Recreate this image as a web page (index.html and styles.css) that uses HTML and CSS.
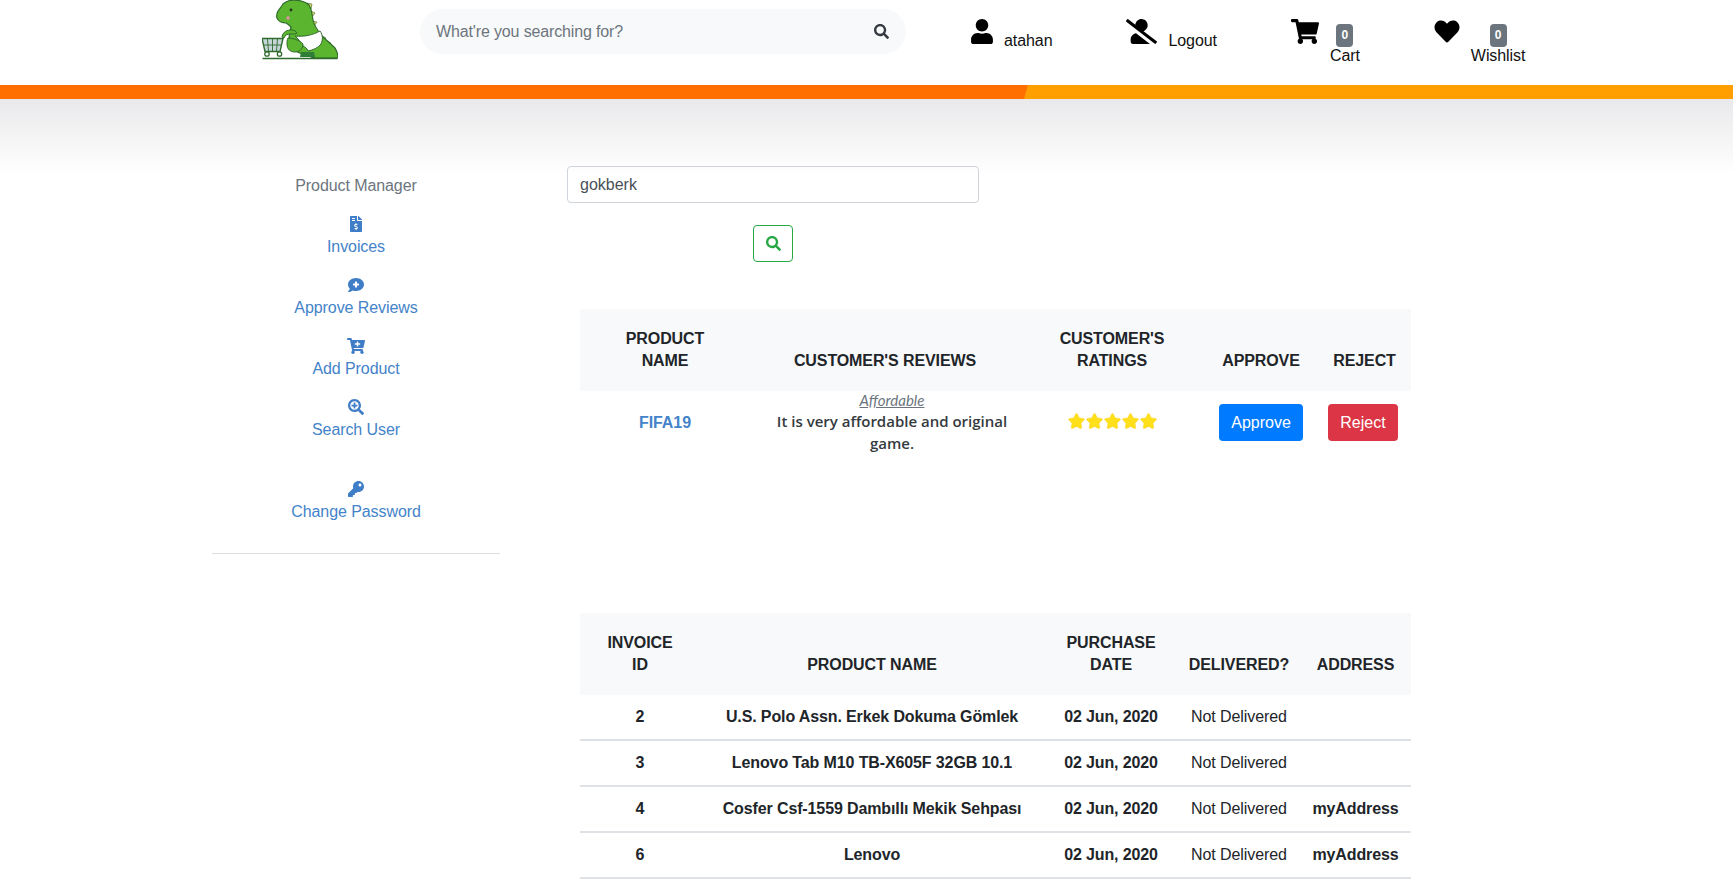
FILE: index.html
```html
<!DOCTYPE html>
<html lang="en">
<head>
    <meta charset="UTF-8">
    <title>Product Manager</title>
    <link rel="stylesheet" href="styles.css">
</head>
<body>
    <header class="top-header">
        <a class="logo" href="#">
            <svg viewBox="0 0 76 60" width="76" height="60">
                <!-- cart -->
                <path d="M0 38.500h21l-3 13H3z" fill="#c5d5d8" stroke="#2f6b2c" stroke-width="1.400"/>
                <path d="M5.500 39l1 12M10.500 39v12M15.500 39l-1 12M1 45h19" stroke="#2f6b2c" stroke-width=".9" fill="none"/>
                <circle cx="5" cy="54" r="2.200" fill="#fff" stroke="#2f6b2c" stroke-width="1.300"/>
                <circle cx="17.500" cy="54" r="2.200" fill="#fff" stroke="#2f6b2c" stroke-width="1.300"/>
                <!-- spikes -->
                <path d="M45 3l5 1-1 5zM49 11l4 2-3 4zM50 21l5 1-3 4zM60 36l4 2-3 3zM65 41l4 2-3 3zM70 46l4 3-4 2z" fill="#e9d66b" stroke="#2f6b2c" stroke-width=".6"/>
                <!-- body and tail -->
                <path d="M28 .500C35-.500 43 1 47 5c3 5 3 10 4 15 1 6 5 11 9 16 4 4 9 8 13 12 2 3 3 6 3 10H54c-5 0-9-3-13-4-6-1-13-6-14-14 0-5 1-9 2-13-2-2-3-3-5-4-4 0-8-2-9-5-1-3 0-5 1-7 2-3 4-5 5-7 2-2 5-3 8-4z" fill="#5cb52f" stroke="#2f6b2c" stroke-width="1.200"/>
                <!-- arm -->
                <path d="M29 30c-3 0-8 1-9 7l2 1c1-3 3-4 7-4 3 0 5 0 6-1-1-2-3-3-6-3z" fill="#5cb52f" stroke="#2f6b2c" stroke-width="1"/>
                <!-- diaper -->
                <path d="M33 36c9 1 18-1 25-5 3 4 3 9 1 13-3 4-8 6-13 7-1-3-3-4-5-5-2-4-5-7-8-10z" fill="#fff" stroke="#2f6b2c" stroke-width="1"/>
                <!-- leg and foot -->
                <path d="M26 38c5 0 11 2 15 6 0 4-3 8-8 8s-8-3-8-8c0-2 0-4 1-6z" fill="#5cb52f" stroke="#2f6b2c" stroke-width="1"/>
                <path d="M39 52h13l1 5H38z" fill="#2f7d36"/>
                <!-- face -->
                <circle cx="29" cy="10" r="1.400" fill="#24331f"/>
                <circle cx="26" cy="18" r="1.700" fill="#e58fa8"/>
                <path d="M.500 58.500h75" stroke="#2f6b2c" stroke-width="1.400"/>
            </svg>
        </a>
        <form class="site-search">
            <input type="text" placeholder="What're you searching for?">
            <svg class="site-search-icon" viewBox="0 0 512 512"><path d="M505 442.700L405.300 343c-4.500-4.500-10.600-7-17-7H372c27.600-35.300 44-79.700 44-128C416 93.100 322.900 0 208 0S0 93.100 0 208s93.100 208 208 208c48.300 0 92.700-16.400 128-44v16.300c0 6.400 2.500 12.500 7 17l99.700 99.700c9.400 9.400 24.600 9.400 33.900 0l28.300-28.300c9.400-9.400 9.400-24.600.1-34zM208 336c-70.700 0-128-57.200-128-128 0-70.700 57.200-128 128-128 70.700 0 128 57.200 128 128 0 70.700-57.200 128-128 128z"/></svg>
        </form>
        <nav class="top-nav">
            <a class="nav-item" href="#">
                <svg class="nav-icon" width="22" height="25" viewBox="0 0 448 512"><path d="M224 256c70.700 0 128-57.300 128-128S294.700 0 224 0 96 57.300 96 128s57.300 128 128 128zm89.600 32h-16.700c-22.200 10.200-46.900 16-72.900 16s-50.600-5.800-72.900-16h-16.700C60.200 288 0 348.200 0 422.400V464c0 26.500 21.500 48 48 48h352c26.500 0 48-21.500 48-48v-41.600c0-74.200-60.200-134.400-134.400-134.400z"/></svg>
                <span class="nav-label">atahan</span>
            </a>
            <a class="nav-item" href="#">
                <svg class="nav-icon" width="31" height="25" viewBox="0 0 640 512"><path d="M633.800 458.100L362.300 248.300C412.100 230.700 448 183.800 448 128 448 57.300 390.700 0 320 0c-67.100 0-121.500 51.800-126.900 117.400L45.500 3.400C38.500-2 28.500-.8 23 6.200L3.400 31.400c-5.400 7-4.200 17 2.800 22.400l588.400 454.700c7 5.400 17 4.200 22.500-2.800l19.600-25.300c5.400-6.800 4.100-16.900-2.900-22.300zM96 422.400V464c0 26.500 21.500 48 48 48h350.200L207.400 290.300C144.200 301.300 96 356 96 422.400z"/></svg>
                <span class="nav-label">Logout</span>
            </a>
            <a class="nav-item" href="#">
                <svg class="nav-icon" width="28" height="25" viewBox="0 0 576 512"><path d="M528.120 301.319l47.273-208C578.806 78.301 567.391 64 551.990 64H159.208l-9.166-44.810C147.758 8.021 137.930 0 126.529 0H24C10.745 0 0 10.745 0 24v16c0 13.255 10.745 24 24 24h69.883l70.248 343.435C147.325 417.100 136 435.222 136 456c0 30.928 25.072 56 56 56s56-25.072 56-56c0-15.674-6.447-29.835-16.824-40h209.647C430.447 426.165 424 440.326 424 456c0 30.928 25.072 56 56 56s56-25.072 56-56c0-22.172-12.888-41.332-31.579-50.405l5.517-24.276c3.413-15.018-8.002-29.319-23.403-29.319H218.117l-6.545-32h293.145c11.206 0 20.920-7.754 23.403-18.681z"/></svg>
                <span class="nav-count">
                    <span class="badge">0</span>
                    <span class="nav-count-label">Cart</span>
                </span>
            </a>
            <a class="nav-item" href="#">
                <svg class="nav-icon" width="26" height="25" viewBox="0 0 512 512"><path d="M462.300 62.600C407.500 15.900 326 24.300 275.700 76.200L256 96.500l-19.700-20.300C186.100 24.300 104.500 15.900 49.700 62.600c-62.800 53.600-66.100 149.800-9.900 207.900l193.500 199.800c12.500 12.900 32.800 12.900 45.300 0l193.500-199.800c56.300-58.100 53-154.300-9.800-207.900z"/></svg>
                <span class="nav-count">
                    <span class="badge">0</span>
                    <span class="nav-count-label">Wishlist</span>
                </span>
            </a>
        </nav>
    </header>

    <div class="color-bar"><div class="color-bar-left"></div></div>

    <div class="page-body">
        <aside class="sidebar">
            <p class="sidebar-title">Product Manager</p>
            <a class="side-link" href="#">
                <svg width="16" height="16" viewBox="0 0 384 512"><path d="M377 105L279.100 7c-4.500-4.500-10.600-7-17-7H256v128h128v-6.100c0-6.300-2.500-12.400-7-16.900zm-153 31V0H24C10.700 0 0 10.700 0 24v464c0 13.300 10.700 24 24 24h336c13.300 0 24-10.700 24-24V160H248c-13.200 0-24-10.800-24-24zM64 72c0-4.420 3.580-8 8-8h80c4.420 0 8 3.580 8 8v16c0 4.420-3.580 8-8 8H72c-4.420 0-8-3.580-8-8V72zm0 80v-16c0-4.420 3.580-8 8-8h80c4.420 0 8 3.580 8 8v16c0 4.420-3.580 8-8 8H72c-4.420 0-8-3.580-8-8zm144 263.880V440c0 4.420-3.580 8-8 8h-16c-4.420 0-8-3.580-8-8v-24.290c-11.290-.58-22.270-4.520-31.370-11.350-3.900-2.930-4.100-8.770-.57-12.140l11.750-11.210c2.770-2.640 6.890-2.760 10.130-.73 3.870 2.420 8.260 3.720 12.820 3.720h28.110c6.500 0 11.800-5.920 11.800-13.190 0-5.950-3.610-11.190-8.770-12.730l-45-13.500c-18.590-5.580-31.580-23.420-31.580-43.390 0-24.520 19.050-44.440 42.670-45.070V240c0-4.420 3.580-8 8-8h16c4.420 0 8 3.580 8 8v24.290c11.290.58 22.270 4.510 31.370 11.350 3.900 2.930 4.100 8.770.57 12.140l-11.750 11.210c-2.770 2.640-6.890 2.760-10.130.73-3.870-2.430-8.260-3.720-12.820-3.720h-28.110c-6.500 0-11.800 5.920-11.800 13.190 0 5.950 3.610 11.190 8.770 12.730l45 13.500c18.590 5.580 31.580 23.420 31.580 43.390 0 24.530-19.050 44.440-42.670 45.070z"/></svg>
                <span>Invoices</span>
            </a>
            <a class="side-link" href="#">
                <svg width="16" height="16" viewBox="0 0 512 512"><path d="M256 32C114.620 32 0 125.120 0 240c0 49.560 21.410 95 57 130.740C44.460 421.050 2.700 466 2.200 466.500A8 8 0 0 0 8 480c66.260 0 116-31.750 140.600-51.380A304.660 304.660 0 0 0 256 448c141.390 0 256-93.120 256-208S397.390 32 256 32zm96 232a8 8 0 0 1-8 8h-56v56a8 8 0 0 1-8 8h-48a8 8 0 0 1-8-8v-56h-56a8 8 0 0 1-8-8v-48a8 8 0 0 1 8-8h56v-56a8 8 0 0 1 8-8h48a8 8 0 0 1 8 8v56h56a8 8 0 0 1 8 8z"/></svg>
                <span>Approve Reviews</span>
            </a>
            <a class="side-link" href="#">
                <svg width="18" height="16" viewBox="0 0 576 512"><path d="M504.717 320H211.572l6.545 32h268.418c15.401 0 26.816 14.301 23.403 29.319l-5.517 24.276C523.112 414.668 536 433.828 536 456c0 31.202-25.519 56.444-56.824 55.994-29.823-.429-54.350-24.631-55.155-54.447-.44-16.287 6.085-31.049 16.803-41.548H231.176C241.553 426.165 248 440.326 248 456c0 31.813-26.528 57.431-58.670 55.938-28.540-1.325-51.751-24.385-53.251-52.917-1.158-22.034 10.436-41.455 28.051-51.586L93.883 64H24C10.745 64 0 53.255 0 40V24C0 10.745 10.745 0 24 0h102.529c11.401 0 21.228 8.021 23.513 19.190L159.208 64H551.990c15.401 0 26.816 14.301 23.403 29.319l-47.273 208C525.637 312.246 515.923 320 504.717 320zM408 168h-48v-40c0-8.837-7.163-16-16-16h-16c-8.837 0-16 7.163-16 16v40h-48c-8.837 0-16 7.163-16 16v16c0 8.837 7.163 16 16 16h48v40c0 8.837 7.163 16 16 16h16c8.837 0 16-7.163 16-16v-40h48c8.837 0 16-7.163 16-16v-16c0-8.837-7.163-16-16-16z"/></svg>
                <span>Add Product</span>
            </a>
            <a class="side-link" href="#">
                <svg width="16" height="16" viewBox="0 0 512 512"><path d="M304 192v32c0 6.600-5.400 12-12 12h-56v56c0 6.600-5.400 12-12 12h-32c-6.600 0-12-5.400-12-12v-56h-56c-6.600 0-12-5.400-12-12v-32c0-6.600 5.400-12 12-12h56v-56c0-6.600 5.400-12 12-12h32c6.600 0 12 5.400 12 12v56h56c6.600 0 12 5.400 12 12zm201 284.700L476.700 505c-9.400 9.400-24.600 9.400-33.900 0L343 405.300c-4.500-4.500-7-10.600-7-17V372c-35.300 27.600-79.700 44-128 44C93.100 416 0 322.900 0 208S93.100 0 208 0s208 93.100 208 208c0 48.300-16.400 92.700-44 128h16.300c6.400 0 12.500 2.500 17 7l99.700 99.700c9.300 9.400 9.300 24.600 0 34zM344 208c0-75.200-60.800-136-136-136S72 132.800 72 208s60.800 136 136 136 136-60.800 136-136z"/></svg>
                <span>Search User</span>
            </a>
            <a class="side-link side-link-password" href="#">
                <svg width="16" height="16" viewBox="0 0 512 512"><path d="M512 176.001C512 273.203 433.202 352 336 352c-11.220 0-22.190-1.062-32.827-3.069l-24.012 27.014A23.999 23.999 0 0 1 261.223 384H224v40c0 13.255-10.745 24-24 24h-40v40c0 13.255-10.745 24-24 24H24c-13.255 0-24-10.745-24-24v-78.059c0-6.365 2.529-12.470 7.029-16.971l161.802-161.802C163.108 213.814 160 195.271 160 176 160 78.798 238.797.001 335.999 0 433.488-.001 512 78.511 512 176.001zM336 128c0 26.510 21.490 48 48 48s48-21.490 48-48-21.490-48-48-48-48 21.490-48 48z"/></svg>
                <span>Change Password</span>
            </a>
            <hr class="sidebar-line">
        </aside>

        <main class="content">
            <form class="user-search">
                <input type="text" value="gokberk">
                <button type="button">
                    <svg width="14" height="14" viewBox="0 0 512 512"><path d="M505 442.700L405.300 343c-4.500-4.500-10.600-7-17-7H372c27.600-35.300 44-79.700 44-128C416 93.100 322.900 0 208 0S0 93.100 0 208s93.100 208 208 208c48.300 0 92.700-16.400 128-44v16.300c0 6.400 2.500 12.500 7 17l99.700 99.700c9.400 9.400 24.600 9.400 33.900 0l28.300-28.300c9.400-9.400 9.400-24.600.1-34zM208 336c-70.700 0-128-57.200-128-128 0-70.700 57.200-128 128-128 70.700 0 128 57.200 128 128 0 70.700-57.200 128-128 128z"/></svg>
                </button>
            </form>

            <table class="data-table reviews-table">
                <thead>
                    <tr>
                        <th>Product<br>Name</th>
                        <th>Customer's Reviews</th>
                        <th>Customer's<br>Ratings</th>
                        <th>Approve</th>
                        <th>Reject</th>
                    </tr>
                </thead>
                <tbody>
                    <tr>
                        <td class="product-cell"><a class="product-link" href="#">FIFA19</a></td>
                        <td class="review-cell">
                            <span class="review-title">Affordable</span>
                            <span class="review-text">It is very affordable and original game.</span>
                        </td>
                        <td>
                            <span class="stars">
                                <svg viewBox="0 0 576 512"><path d="M259.300 17.800L194 150.200 47.900 171.500c-26.200 3.800-36.700 36.100-17.700 54.600l105.700 103-25 145.500c-4.500 26.300 23.200 46 46.400 33.700L288 439.600l130.700 68.700c23.200 12.200 50.900-7.400 46.400-33.700l-25-145.500 105.700-103c19-18.500 8.500-50.800-17.700-54.600L382 150.200 316.700 17.800c-11.700-23.600-45.600-23.900-57.400 0z"/></svg>
                                <svg viewBox="0 0 576 512"><path d="M259.300 17.800L194 150.200 47.900 171.500c-26.200 3.800-36.700 36.100-17.700 54.600l105.700 103-25 145.500c-4.500 26.300 23.200 46 46.400 33.700L288 439.600l130.700 68.700c23.200 12.200 50.900-7.400 46.400-33.700l-25-145.500 105.700-103c19-18.500 8.500-50.800-17.700-54.600L382 150.200 316.700 17.800c-11.700-23.600-45.600-23.900-57.400 0z"/></svg>
                                <svg viewBox="0 0 576 512"><path d="M259.300 17.800L194 150.200 47.900 171.500c-26.200 3.800-36.700 36.100-17.700 54.600l105.700 103-25 145.500c-4.500 26.300 23.200 46 46.400 33.700L288 439.600l130.700 68.700c23.200 12.200 50.900-7.400 46.400-33.700l-25-145.500 105.700-103c19-18.500 8.500-50.800-17.700-54.600L382 150.200 316.700 17.800c-11.700-23.600-45.600-23.900-57.400 0z"/></svg>
                                <svg viewBox="0 0 576 512"><path d="M259.300 17.800L194 150.200 47.900 171.500c-26.200 3.800-36.700 36.100-17.700 54.600l105.700 103-25 145.500c-4.500 26.300 23.200 46 46.400 33.700L288 439.600l130.700 68.700c23.200 12.200 50.900-7.400 46.400-33.700l-25-145.500 105.700-103c19-18.500 8.500-50.800-17.700-54.600L382 150.200 316.700 17.800c-11.700-23.600-45.600-23.900-57.400 0z"/></svg>
                                <svg viewBox="0 0 576 512"><path d="M259.300 17.800L194 150.200 47.900 171.500c-26.200 3.800-36.700 36.100-17.700 54.600l105.700 103-25 145.500c-4.500 26.300 23.200 46 46.400 33.700L288 439.600l130.700 68.700c23.200 12.200 50.900-7.400 46.400-33.700l-25-145.500 105.700-103c19-18.500 8.500-50.800-17.700-54.600L382 150.200 316.700 17.800c-11.700-23.600-45.600-23.900-57.400 0z"/></svg>
                            </span>
                        </td>
                        <td><button class="btn btn-approve">Approve</button></td>
                        <td class="reject-cell"><button class="btn btn-reject">Reject</button></td>
                    </tr>
                </tbody>
            </table>

            <table class="data-table invoices-table">
                <thead>
                    <tr>
                        <th>Invoice<br>ID</th>
                        <th>Product Name</th>
                        <th>Purchase<br>Date</th>
                        <th>Delivered?</th>
                        <th>Address</th>
                    </tr>
                </thead>
                <tbody>
                    <tr>
                        <td class="strong">2</td>
                        <td class="strong">U.S. Polo Assn. Erkek Dokuma Gömlek</td>
                        <td class="strong">02 Jun, 2020</td>
                        <td>Not Delivered</td>
                        <td class="strong"></td>
                    </tr>
                    <tr>
                        <td class="strong">3</td>
                        <td class="strong">Lenovo Tab M10 TB-X605F 32GB 10.1</td>
                        <td class="strong">02 Jun, 2020</td>
                        <td>Not Delivered</td>
                        <td class="strong"></td>
                    </tr>
                    <tr>
                        <td class="strong">4</td>
                        <td class="strong">Cosfer Csf-1559 Dambıllı Mekik Sehpası</td>
                        <td class="strong">02 Jun, 2020</td>
                        <td>Not Delivered</td>
                        <td class="strong">myAddress</td>
                    </tr>
                    <tr>
                        <td class="strong">6</td>
                        <td class="strong">Lenovo</td>
                        <td class="strong">02 Jun, 2020</td>
                        <td>Not Delivered</td>
                        <td class="strong">myAddress</td>
                    </tr>
                </tbody>
            </table>
        </main>
    </div>
</body>
</html>
```

FILE: styles.css
```css
/* General Styles */
html,
body {
    height: 100%;
}

body {
    margin: 0;
    font-family: "Liberation Sans", Arial, sans-serif;
    font-size: 16px;
    line-height: 24px;
    letter-spacing: -.08px;
    color: #212529;
    background: #fff;
    overflow: hidden;
}

a {
    text-decoration: none;
    color: inherit;
}

/* Header */
.top-header {
    display: flex;
    height: 85px;
    padding-left: 262px;
}

.logo {
    display: block;
    width: 76px;
    height: 60px;
}

.site-search {
    display: flex;
    align-items: center;
    width: 486px;
    height: 45px;
    margin: 9px 0 0 82px;
    padding: 0 16px;
    box-sizing: border-box;
    background: #f8f9fa;
    border-radius: 23px;
}

.site-search input {
    flex: 1;
    border: none;
    outline: none;
    background: transparent;
    font: inherit;
    letter-spacing: -.14px;
    padding: 0;
}

.site-search input::placeholder {
    color: #6c757d;
    opacity: 1;
}

.site-search-icon {
    width: 15px;
    height: 15px;
    margin-right: 1px;
    fill: #343a40;
}

.top-nav {
    display: flex;
    gap: 74px;
    margin: 19px 0 0 65px;
}

.nav-item {
    display: flex;
    align-items: flex-start;
    gap: 11px;
    color: #111;
}

.nav-icon {
    display: block;
    fill: #000;
}

.nav-label {
    margin-top: 10px;
}

.nav-count {
    display: flex;
    flex-direction: column;
    align-items: center;
    margin-top: 5px;
    line-height: 16px;
}

.nav-count-label {
    margin-top: 1px;
}

.badge {
    display: block;
    width: 17px;
    height: 23px;
    border-radius: 4px;
    background: #6c757d;
    color: #fff;
    font-size: 12px;
    font-weight: bold;
    line-height: 23px;
    text-align: center;
}

/* Orange stripe */
.color-bar {
    height: 14px;
    background: #ffa000;
}

.color-bar-left {
    width: 1028px;
    height: 14px;
    background: #ff6f00;
    clip-path: polygon(0 0, 100% 0, 1024px 100%, 0 100%);
}

/* Page body */
.page-body {
    display: flex;
    gap: 67px;
    padding: 67px 0 0 212px;
    background: linear-gradient(#e9e9eb, #fff 75px);
    background-repeat: no-repeat;
}

/* Sidebar */
.sidebar {
    width: 288px;
    text-align: center;
}

.sidebar-title {
    margin: 8px 0 18px;
    color: #6c757d;
}

.side-link {
    display: flex;
    flex-direction: column;
    align-items: center;
    gap: 3px;
    margin-bottom: 18px;
    color: #4483c9;
}

.side-link svg {
    display: block;
    fill: #3f7ec6;
}

.side-link-password {
    margin-top: 39px;
    margin-bottom: 29px;
}

.sidebar-line {
    margin: 0;
    border: none;
    border-top: 1px solid #ddd;
}

/* Search form */
.user-search {
    display: flex;
    flex-direction: column;
    align-items: center;
    gap: 22px;
    width: 412px;
}

.user-search input {
    width: 100%;
    height: 37px;
    box-sizing: border-box;
    padding: 0 12px;
    border: 1px solid #ced4da;
    border-radius: 4px;
    background: transparent;
    color: #495057;
    font: inherit;
}

.user-search button {
    display: flex;
    align-items: center;
    justify-content: center;
    width: 40px;
    height: 37px;
    padding: 0;
    border: 1px solid #28a745;
    border-radius: 4px;
    background: transparent;
}

.user-search svg {
    width: 15px;
    height: 15px;
    fill: #28a745;
}

/* Tables */
.data-table {
    width: 831px;
    margin-left: 13px;
    border-collapse: collapse;
    table-layout: fixed;
    text-align: center;
}

.data-table th {
    padding: 19px 0;
    background: #f8f9fa;
    color: #212529;
    font-weight: bold;
    line-height: 22px;
    letter-spacing: -.1px;
    text-transform: uppercase;
    vertical-align: bottom;
}

.reviews-table {
    margin-top: 47px;
}

.reviews-table th:nth-child(1) { width: 170px; }
.reviews-table th:nth-child(2) { width: 270px; }
.reviews-table th:nth-child(3) { width: 184px; }
.reviews-table th:nth-child(4) { width: 114px; }

.reviews-table td {
    padding: 0;
    height: 60px;
}

.product-link {
    color: #4483c9;
    font-weight: bold;
}

.reviews-table .review-cell {
    padding-left: 14px;
}

.review-title {
    display: block;
    font-family: Lato, sans-serif;
    font-size: 15px;
    font-style: italic;
    line-height: 19px;
    letter-spacing: 0;
    color: #6c757d;
    text-decoration: underline;
}

.review-text {
    display: block;
    width: 240px;
    margin: 0 auto;
    font-family: "Open Sans", sans-serif;
    font-size: 15px;
    font-weight: 600;
    line-height: 22px;
    letter-spacing: 0;
    color: #343a40;
}

.stars {
    display: flex;
    justify-content: center;
    gap: 1px;
    margin-bottom: 3px;
}

.stars svg {
    width: 17px;
    height: 16px;
    fill: #ffe01b;
    stroke: #f2c811;
    stroke-width: 14;
}

.btn {
    height: 37px;
    padding: 0 12px;
    border: none;
    border-radius: 4px;
    color: #fff;
    font: inherit;
    letter-spacing: 0;
}

.btn-approve {
    background: #007bff;
}

.btn-reject {
    background: #dc3545;
}

.reviews-table .reject-cell {
    padding-right: 3px;
}

.invoices-table {
    margin-top: 159px;
}

.invoices-table th:nth-child(1) { width: 120px; }
.invoices-table th:nth-child(2) { width: 344px; }
.invoices-table th:nth-child(3) { width: 134px; }
.invoices-table th:nth-child(4) { width: 122px; }

.invoices-table td {
    height: 44px;
    padding: 0;
    border-bottom: 2px solid #dee2e6;
}

.strong {
    font-weight: bold;
    letter-spacing: -.12px;
}
```
